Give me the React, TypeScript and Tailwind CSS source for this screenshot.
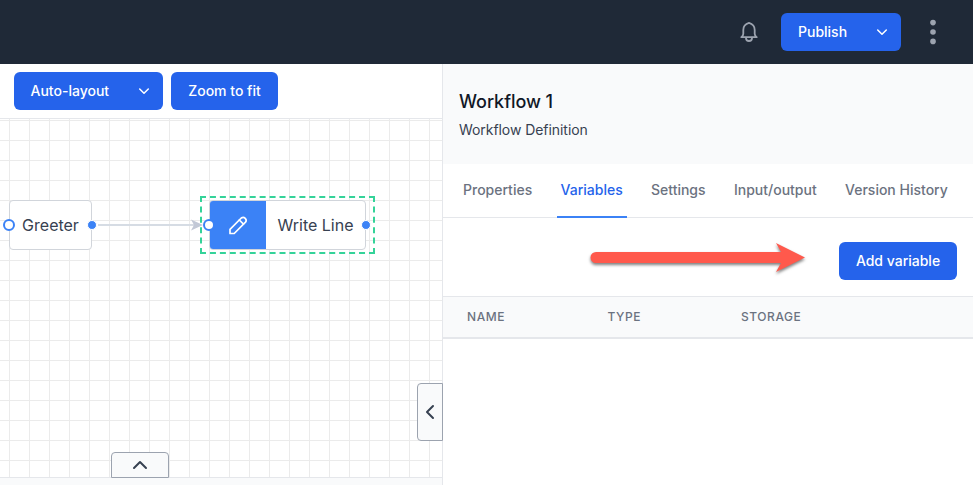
import React from "react";

const button =
  "flex h-[38px] items-center rounded-md bg-[#2563eb] text-sm font-medium text-white whitespace-nowrap";

function Chevron({ d, className }: { d: string; className: string }) {
  return (
    <svg className={className} viewBox="0 0 24 24" fill="none" stroke="currentColor" strokeWidth="2" strokeLinecap="round" strokeLinejoin="round">
      <path d={d} />
    </svg>
  );
}

function DropdownChevron() {
  return (
    <svg className="h-5 w-5" viewBox="0 0 20 20" fill="none" stroke="currentColor" strokeWidth="1.5" strokeLinecap="round" strokeLinejoin="round">
      <path d="M5.700 8L10 12.300L14.300 8" />
    </svg>
  );
}

function Header() {
  return (
    <header className="flex h-16 shrink-0 items-center justify-end bg-[#1f2937] pr-[34px]">
      <svg className="h-6 w-6 text-[#9ca3af]" viewBox="0 0 24 24" fill="none" stroke="currentColor" strokeWidth="1.8" strokeLinecap="round" strokeLinejoin="round">
        <path d="M12 2.900C8.800 3.800 6.300 6.200 6.300 10V13.800C6.300 15.300 5.500 16.300 4.300 17.200H19.700C18.500 16.300 17.700 15.300 17.700 13.800V10C17.700 6.200 15.200 3.800 12 2.900Z" />
        <path d="M9 17.600V18a3 3 0 006 0V17.600" />
      </svg>
      <button className={button + " ml-5 w-[120px] justify-between pl-[17px] pr-[9px]"}>
        Publish
        <DropdownChevron />
      </button>
      <svg className="ml-[26px] h-7 w-3 text-[#9ca3af]" viewBox="0 0 12 28" fill="currentColor">
        <circle cx="6" cy="4.6" r="2.8" />
        <circle cx="6" cy="14" r="2.8" />
        <circle cx="6" cy="23.4" r="2.8" />
      </svg>
    </header>
  );
}

function Canvas() {
  return (
    <div className="relative min-h-0 flex-1 bg-white bg-[linear-gradient(to_right,#ebebeb_1px,transparent_1px),linear-gradient(to_bottom,#ebebeb_1px,transparent_1px)] bg-[length:20px_20px] bg-[position:9px_1px]">
      <svg className="absolute left-[98px] top-[98px] h-4 w-[108px]" viewBox="0 0 108 16">
        <path d="M0 8H96" stroke="#d6dce4" strokeWidth="2" />
        <path d="M93 2.5L105 8L93 13.5L96 8Z" fill="#c2c8d6" />
      </svg>
      <div className="absolute left-[9px] top-[81px] flex h-[50px] w-[83px] items-center justify-center rounded border border-[#d1d5db] bg-white text-base text-[#374151]">
        Greeter
      </div>
      <div className="absolute left-[3px] top-[100px] h-3 w-3 rounded-full border-2 border-[#3b82f6] bg-white" />
      <div className="absolute left-[87px] top-[101px] h-[10px] w-[10px] rounded-full border border-white bg-[#3b82f6]" />
      <svg className="absolute left-[200px] top-[77px] h-[58px] w-[175px]" viewBox="0 0 175 58" fill="none" stroke="#34d399" strokeWidth="2">
        <path d="M0 1H175" strokeDasharray="6 3.94" />
        <path d="M0 57H175" strokeDasharray="6 3.94" />
        <path d="M1 0V58" strokeDasharray="6 4.4" />
        <path d="M174 0V58" strokeDasharray="6 4.4" />
      </svg>
      <div className="absolute left-[209px] top-[81px] flex h-[50px] w-[157px] overflow-hidden rounded border border-[#d1d5db] bg-white text-base text-[#374151]">
        <div className="flex w-14 shrink-0 items-center justify-center bg-[#3b82f6] text-white">
          <svg className="h-6 w-6" viewBox="0 0 24 24" fill="none" stroke="currentColor" strokeWidth="1.7" strokeLinecap="round" strokeLinejoin="round">
            <path d="M4 20.500V16.300L15.300 5a3 3 0 014.200 4.200L8.200 20.500Z" />
            <path d="M13.300 7L17.500 11.200" />
          </svg>
        </div>
        <div className="flex flex-1 items-center justify-center whitespace-nowrap">Write Line</div>
      </div>
      <div className="absolute left-[203px] top-[100px] h-3 w-3 rounded-full border-2 border-[#3b82f6] bg-white" />
      <div className="absolute left-[361px] top-[101px] h-[10px] w-[10px] rounded-full border border-white bg-[#3b82f6]" />
      <button className="absolute left-[417px] top-[264px] z-10 flex h-[58px] w-[26px] items-center justify-center rounded-l border border-[#9ca3af] bg-[#f9fafb] text-[#374151]">
        <Chevron className="h-6 w-6" d="M15 18L9 12L15 6" />
      </button>
      <button className="absolute left-[111px] top-[333px] z-10 flex h-[26px] w-[58px] items-center justify-center rounded-t border border-[#9ca3af] bg-[#f9fafb] text-[#374151]">
        <Chevron className="h-6 w-6" d="M6 15L12 9L18 15" />
      </button>
    </div>
  );
}

function Tab({ label, active = false }: { label: string; active?: boolean }) {
  return (
    <a
      className={
        "flex h-[54px] items-center border-b-2 px-1 text-sm font-medium whitespace-nowrap " +
        (active ? "border-[#3b82f6] text-[#2563eb]" : "border-transparent text-[#6b7280]")
      }
    >
      {label}
    </a>
  );
}

function Details() {
  return (
    <aside className="flex min-w-0 flex-1 flex-col bg-white">
      <div className="h-[100px] bg-[#f9fafb] px-4 pt-6">
        <h2 className="text-lg leading-7 font-medium tracking-[-0.05px] text-[#111827]">Workflow 1</h2>
        <p className="mt-1 text-sm tracking-[-0.06px] text-[#374151]">Workflow Definition</p>
      </div>
      <nav className="flex h-[54px] gap-[20.35px] bg-[linear-gradient(to_top,#e5e7eb_1px,white_1px)] pl-4">
        <Tab label="Properties" />
        <Tab label="Variables" active />
        <Tab label="Settings" />
        <Tab label="Input/output" />
        <Tab label="Version History" />
      </nav>
      <div className="flex h-[78px] items-center justify-end pr-4 pt-2">
        <svg className="mr-[19px] h-[50px] w-[240px] overflow-visible" viewBox="0 0 240 50">
          <path
            className="drop-shadow-[0_2px_1.5px_rgba(0,0,0,0.5)]"
            d="M16 16H201L196 7L225 21.500L196 36L201 27H16A5.500 5.500 0 0 1 16 16Z"
            fill="#ff594c"
          />
        </svg>
        <button className={button + " w-[118px] justify-center"}>Add variable</button>
      </div>
      <div className="flex h-[43px] items-center border-t border-b-2 border-[#e5e7eb] bg-[#f9fafb] pl-6 text-xs font-medium tracking-[0.55px] text-[#6b7280]">
        <div className="w-[140.5px]">NAME</div>
        <div className="w-[133.5px]">TYPE</div>
        <div>STORAGE</div>
      </div>
    </aside>
  );
}

export default function App() {
  return (
    <div className="flex h-[485px] w-[973px] flex-col overflow-hidden bg-white font-['Inter',sans-serif]">
      <Header />
      <div className="flex min-h-0 flex-1">
        <main className="flex w-[443px] shrink-0 flex-col border-r border-[#e5e7eb]">
          <div className="flex h-[55px] shrink-0 items-center gap-2 border-b border-[#e5e7eb] pl-[14px]">
            <button className={button + " w-[149px] justify-between pl-[16.5px] pr-[9px]"}>
              Auto-layout
              <DropdownChevron />
            </button>
            <button className={button + " w-[107px] justify-center"}>Zoom to fit</button>
          </div>
          <Canvas />
          <div className="h-2 shrink-0 border-t border-[#e5e7eb] bg-[#f9fafb]" />
        </main>
        <Details />
      </div>
    </div>
  );
}
